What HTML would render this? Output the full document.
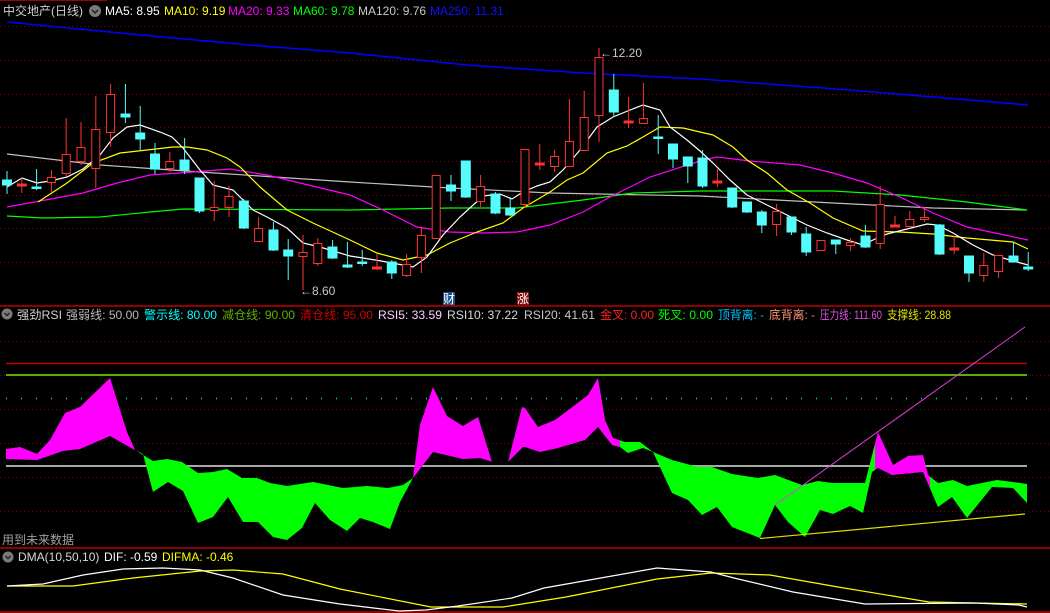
<!DOCTYPE html>
<html><head><meta charset="utf-8"><style>
html,body{margin:0;padding:0;background:#000;width:1050px;height:613px;overflow:hidden}
svg{display:block}
text{font-family:"Liberation Sans","Noto Sans CJK SC",sans-serif;font-size:12px}
</style></head><body>
<svg width="1050" height="613" viewBox="0 0 1050 613" xmlns="http://www.w3.org/2000/svg">
<rect width="1050" height="613" fill="#000"/>
<line x1="0" y1="0.5" x2="107" y2="0.5" stroke="#a00000"/>
<g stroke="#8a0000" stroke-dasharray="1,3" stroke-width="1">
<line x1="0" y1="26.5" x2="1050" y2="26.5"/><line x1="0" y1="60.5" x2="1050" y2="60.5"/>
<line x1="0" y1="94.5" x2="1050" y2="94.5"/><line x1="0" y1="127.5" x2="1050" y2="127.5"/>
<line x1="0" y1="161.5" x2="1050" y2="161.5"/><line x1="0" y1="195.5" x2="1050" y2="195.5"/>
<line x1="0" y1="228.5" x2="1050" y2="228.5"/><line x1="0" y1="262.5" x2="1050" y2="262.5"/>
<line x1="0" y1="341.5" x2="1050" y2="341.5"/><line x1="0" y1="375.5" x2="1050" y2="375.5"/>
<line x1="0" y1="409.5" x2="1050" y2="409.5"/><line x1="0" y1="443.5" x2="1050" y2="443.5"/>
<line x1="0" y1="477.5" x2="1050" y2="477.5"/><line x1="0" y1="511.5" x2="1050" y2="511.5"/>
</g>
<line x1="0" y1="306" x2="1050" y2="306" stroke="#c00000" stroke-width="1.5"/>
<line x1="0" y1="548" x2="1050" y2="548" stroke="#c00000" stroke-width="1.5"/>
<line x1="0" y1="612" x2="1050" y2="612" stroke="#c00000" stroke-width="1.5"/>

<g fill="none" stroke-width="1.2">
<polyline stroke="#0000ff" stroke-width="1.6" points="7,22 120,33 250,45 350,53 467,65 583,73 700,79 850,90 1028,105"/>
<polyline stroke="#c0c0c0" points="7,154 100,165 200,172 350,182 450,188 550,193 700,196 833,203 933,208 1027,210"/>
<polyline stroke="#00ff00" points="7,216 43,218 100,217 150,212 183,209 350,210 450,208 517,208 583,200 633,193 700,191 833,191 900,195 967,202 1027,210"/>
<polyline stroke="#ff00ff" points="7,207 40,201 83,193 117,183 150,175 193,172 230,169 267,175 300,183 350,195 383,210 417,227 450,232 483,233 517,232 550,225 583,212 610,197 650,177 700,161 717,157 750,161 800,165 833,173 867,183 900,197 933,213 967,227 1028,240"/>
<polyline stroke="#ffff00" points="38,202 67,183 93,163 120,153 147,150 173,147 187,147 207,150 227,158 240,167 260,187 287,210 313,223 350,240 377,253 403,260 427,255 450,243 477,232 503,223 523,208 550,192 567,180 583,173 607,153 627,146 643,137 660,127 683,128 700,132 713,135 733,147 747,160 767,173 787,190 810,203 833,218 863,231 900,232 933,234 967,238 1013,242 1028,249"/>
<polyline stroke="#ffffff" points="7,187 22,178 37,183 50,181 67,177 83,169 100,155 113,138 127,127 140,125 160,132 172,137 183,148 200,170 213,185 233,190 253,210 267,217 287,228 303,243 320,247 350,256 363,258 387,262 413,267 427,257 443,235 460,217 483,196 500,194 512,199 523,192 537,186 550,182 563,170 580,150 597,127 613,117 630,110 643,105 660,110 670,127 687,140 700,151 713,163 730,180 747,195 767,205 787,215 807,225 827,233 847,240 863,245 873,240 887,234 907,229 927,224 937,225 953,233 973,245 993,255 1013,261 1028,265"/>
</g>

<g stroke-width="1">
<g stroke="#54fcfc" fill="#54fcfc">
<line x1="7" y1="171" x2="7" y2="194"/><rect x="2.5" y="180" width="9" height="5"/>
<line x1="36.6" y1="169" x2="36.6" y2="190"/><rect x="32" y="187" width="9" height="1.5"/>
<line x1="125.4" y1="84" x2="125.4" y2="123"/><rect x="121" y="114" width="9" height="3"/>
<line x1="140.2" y1="106" x2="140.2" y2="151"/><rect x="135.7" y="133" width="9" height="6"/>
<line x1="155" y1="143" x2="155" y2="174"/><rect x="150.5" y="154" width="9" height="15"/>
<line x1="184.6" y1="138" x2="184.6" y2="174"/><rect x="180" y="160" width="9" height="10"/>
<line x1="199.4" y1="178" x2="199.4" y2="213"/><rect x="195" y="178" width="9" height="33"/>
<line x1="243.8" y1="199" x2="243.8" y2="229"/><rect x="239.3" y="201" width="9" height="27"/>
<line x1="273.4" y1="222" x2="273.4" y2="251"/><rect x="269" y="230" width="9" height="20"/>
<line x1="288.2" y1="239" x2="288.2" y2="280"/><rect x="283.7" y="250" width="9" height="6"/>
<line x1="332.6" y1="240" x2="332.6" y2="259"/><rect x="328" y="247" width="9" height="11"/>
<line x1="347.4" y1="242" x2="347.4" y2="268"/><rect x="343" y="265" width="9" height="2"/>
<line x1="362.2" y1="250" x2="362.2" y2="266"/><rect x="357.7" y="262" width="9" height="1.5"/>
<line x1="391.8" y1="260" x2="391.8" y2="279"/><rect x="387.3" y="262" width="9" height="11"/>
<line x1="451" y1="175" x2="451" y2="201"/><rect x="446.5" y="185" width="9" height="6"/>
<line x1="465.8" y1="161" x2="465.8" y2="198"/><rect x="461.3" y="161" width="9" height="36"/>
<line x1="495.4" y1="192" x2="495.4" y2="214"/><rect x="491" y="194" width="9" height="19"/>
<line x1="510.2" y1="197" x2="510.2" y2="216"/><rect x="505.7" y="208" width="9" height="7"/>
<line x1="613.8" y1="74" x2="613.8" y2="117"/><rect x="609.3" y="90" width="9" height="22"/>
<line x1="658.2" y1="115" x2="658.2" y2="154"/><rect x="653.7" y="137" width="9" height="1.5"/>
<line x1="673" y1="144" x2="673" y2="168"/><rect x="668.5" y="144" width="9" height="15"/>
<line x1="687.8" y1="157" x2="687.8" y2="183"/><rect x="683.3" y="157" width="9" height="9"/>
<line x1="702.6" y1="150" x2="702.6" y2="188"/><rect x="698" y="158" width="9" height="28"/>
<line x1="732.2" y1="188" x2="732.2" y2="208"/><rect x="727.7" y="188" width="9" height="19"/>
<line x1="747" y1="202" x2="747" y2="213"/><rect x="742.5" y="202" width="9" height="10"/>
<line x1="761.8" y1="210" x2="761.8" y2="233"/><rect x="757.3" y="212" width="9" height="13"/>
<line x1="791.4" y1="217" x2="791.4" y2="235"/><rect x="787" y="217" width="9" height="15"/>
<line x1="806.2" y1="227" x2="806.2" y2="256"/><rect x="801.7" y="234" width="9" height="18"/>
<line x1="835.8" y1="240" x2="835.8" y2="254"/><rect x="831.3" y="240" width="9" height="4"/>
<line x1="865.4" y1="225" x2="865.4" y2="248"/><rect x="861" y="236" width="9" height="11"/>
<line x1="939.4" y1="224" x2="939.4" y2="255"/><rect x="935" y="225" width="9" height="29"/>
<line x1="969" y1="256" x2="969" y2="282"/><rect x="964.5" y="256" width="9" height="17"/>
<line x1="1013.4" y1="242" x2="1013.4" y2="262"/><rect x="1009" y="256" width="9" height="6"/>
<line x1="1028.2" y1="252" x2="1028.2" y2="271"/><rect x="1023.7" y="267" width="9" height="2"/>
</g>
<g stroke="#ff3232" fill="#000">
<line x1="21.8" y1="178" x2="21.8" y2="193"/><rect x="17.3" y="184" width="9" height="2" fill="#ff3232"/>
<line x1="51.4" y1="170" x2="51.4" y2="192"/><rect x="47.4" y="177.5" width="8" height="5"/>
<line x1="66.2" y1="118" x2="66.2" y2="176"/><rect x="62.2" y="154.5" width="8" height="19"/>
<line x1="81" y1="122" x2="81" y2="165"/><rect x="77" y="147.5" width="8" height="14"/>
<line x1="95.8" y1="96" x2="95.8" y2="188"/><rect x="91.8" y="129.5" width="8" height="39"/>
<line x1="110.6" y1="84" x2="110.6" y2="147"/><rect x="106.6" y="94.5" width="8" height="38"/>
<line x1="169.8" y1="152" x2="169.8" y2="172"/><rect x="165.8" y="161.5" width="8" height="7"/>
<line x1="214.2" y1="181" x2="214.2" y2="221"/><rect x="210.2" y="207.5" width="8" height="3"/>
<line x1="229" y1="186" x2="229" y2="217"/><rect x="225" y="196.5" width="8" height="11"/>
<line x1="258.6" y1="217" x2="258.6" y2="242"/><rect x="254.6" y="228.5" width="8" height="13"/>
<line x1="303" y1="235" x2="303" y2="290"/><rect x="299" y="252.5" width="8" height="4"/>
<line x1="317.8" y1="238" x2="317.8" y2="266"/><rect x="313.8" y="243.5" width="8" height="20"/>
<line x1="377" y1="254" x2="377" y2="270"/><rect x="372.5" y="267" width="9" height="2" fill="#ff3232"/>
<line x1="406.6" y1="254" x2="406.6" y2="277"/><rect x="402.6" y="264.5" width="8" height="11"/>
<line x1="421.4" y1="227" x2="421.4" y2="273"/><rect x="417.4" y="235.5" width="8" height="22"/>
<rect x="432.2" y="175.5" width="8" height="63"/>
<line x1="480.6" y1="175" x2="480.6" y2="207"/><rect x="476.6" y="186.5" width="8" height="15"/>
<line x1="525" y1="149" x2="525" y2="208"/><rect x="521" y="149.5" width="8" height="55"/>
<line x1="539.8" y1="144" x2="539.8" y2="170"/><rect x="535.3" y="163" width="9" height="2" fill="#ff3232"/>
<line x1="554.6" y1="150" x2="554.6" y2="172"/><rect x="550.6" y="156.5" width="8" height="10"/>
<line x1="569.4" y1="99" x2="569.4" y2="167"/><rect x="565.4" y="141.5" width="8" height="25"/>
<line x1="584.2" y1="91" x2="584.2" y2="151"/><rect x="580.2" y="117.5" width="8" height="33"/>
<line x1="599" y1="48" x2="599" y2="142"/><rect x="595" y="57.5" width="8" height="58"/>
<line x1="628.6" y1="97" x2="628.6" y2="128"/><rect x="624.1" y="121" width="9" height="2" fill="#ff3232"/>
<line x1="643.4" y1="83" x2="643.4" y2="124"/><rect x="639.4" y="118.5" width="8" height="5"/>
<line x1="717.4" y1="169" x2="717.4" y2="187"/><rect x="712.9" y="181" width="9" height="2" fill="#ff3232"/>
<line x1="776.6" y1="204" x2="776.6" y2="236"/><rect x="772.6" y="211.5" width="8" height="13"/>
<rect x="817" y="240.5" width="8" height="10"/>
<line x1="850.6" y1="238" x2="850.6" y2="251"/><rect x="846.6" y="242.5" width="8" height="3"/>
<line x1="880.2" y1="186" x2="880.2" y2="249"/><rect x="876.2" y="204.5" width="8" height="39"/>
<line x1="895" y1="216" x2="895" y2="227"/><rect x="890.5" y="225" width="9" height="2" fill="#ff3232"/>
<line x1="909.8" y1="211" x2="909.8" y2="227"/><rect x="905.8" y="219.5" width="8" height="7"/>
<line x1="924.6" y1="207" x2="924.6" y2="222"/><rect x="920.6" y="217.5" width="8" height="2"/>
<line x1="954.2" y1="236" x2="954.2" y2="254"/><rect x="949.7" y="248" width="9" height="2" fill="#ff3232"/>
<line x1="983.8" y1="253" x2="983.8" y2="282"/><rect x="979.8" y="265.5" width="8" height="10"/>
<line x1="998.6" y1="255" x2="998.6" y2="278"/><rect x="994.6" y="255.5" width="8" height="16"/>
</g>
</g>
<text x="600" y="57" fill="#c8c8c8">←12.20</text>
<text x="300" y="295" fill="#c8c8c8">←8.60</text>
<rect x="443" y="292" width="12" height="13" fill="#1c4f86"/><text x="443" y="303" fill="#fff" font-size="11">财</text>
<rect x="517" y="292" width="12" height="13" fill="#8a0c0c"/><text x="517" y="303" fill="#fff" font-size="11">涨</text>

<text x="3" y="15" fill="#d0d0d0">中交地产(日线)</text>
<circle cx="95" cy="11" r="6" fill="#7a7a7a"/><polyline points="92,10 95,13 98,10" fill="none" stroke="#222" stroke-width="1.5"/>
<text x="105" y="15" fill="#fff">MA5: 8.95</text>
<text x="164" y="15" fill="#ffff00">MA10: 9.19</text>
<text x="228" y="15" fill="#ff00ff">MA20: 9.33</text>
<text x="293" y="15" fill="#00ff00">MA60: 9.78</text>
<text x="358" y="15" fill="#c8c8c8">MA120: 9.76</text>
<text x="430" y="15" fill="#1010ff">MA250: 11.31</text>

<defs>
<clipPath id="mg"><rect x="0" y="320" width="138" height="230"/><rect x="413" y="320" width="207" height="230"/><rect x="875" y="320" width="55" height="230"/></clipPath>
<clipPath id="gr"><rect x="138" y="320" width="275" height="230"/><rect x="620" y="320" width="255" height="230"/><rect x="930" y="320" width="120" height="230"/></clipPath>
<polygon id="rp" points="6,449 20,447 37,454 50,440 65,413 80,407 110,378 127,432 135,450 153,461 167,459 182,462 198,473 213,472 227,469 242,478 257,478 270,483 287,486 313,482 343,488 367,486 388,488 403,485 413,478 420,425 433,387 447,416 463,426 478,417 492,462 508,462 522,407 525,408 538,427 555,420 575,405 588,395 598,378 605,420 613,438 625,442 640,442 653,452 672,460 698,467 712,467 732,474 758,478 775,475 802,485 818,481 832,483 865,483 878,432 893,465 908,456 923,455 928,475 938,483 953,480 967,486 997,480 1013,482 1027,484 1027,503 1013,488 992,487 967,518 952,497 938,507 923,472 892,475 878,468 872,472 863,513 850,506 833,514 820,510 805,537 788,522 775,505 760,538 732,527 717,507 702,515 688,500 672,493 653,452 643,448 628,453 620,447 612,445 598,427 585,440 558,448 540,452 525,447 523,447 508,462 493,462 480,458 463,459 433,452 413,478 400,502 390,529 373,522 360,518 347,531 330,520 315,503 302,528 287,540 273,537 258,522 243,522 228,497 213,517 198,523 183,491 168,482 153,492 143,454 133,449 110,436 80,449 63,451 37,460 6,459"/>
</defs>
<line x1="6" y1="363.5" x2="1027" y2="363.5" stroke="#c00000" stroke-width="1.5"/>
<line x1="6" y1="375" x2="1027" y2="375" stroke="#58b000" stroke-width="2"/>
<line x1="6" y1="398.5" x2="1027" y2="398.5" stroke="#00e0e0" stroke-dasharray="1,14" stroke-width="1.5"/>
<line x1="6" y1="466" x2="1027" y2="466" stroke="#a8a8a8" stroke-width="2"/>
<use href="#rp" clip-path="url(#gr)" fill="#00ff00"/>
<use href="#rp" clip-path="url(#mg)" fill="#ff00ff"/>
<line x1="775" y1="505" x2="1025" y2="327" stroke="#e040e0" stroke-width="1"/>
<line x1="760" y1="538.5" x2="1025" y2="514" stroke="#e0e000" stroke-width="1.2"/>
<text x="2" y="544" fill="#a0a0a0">用到未来数据</text>

<circle cx="7" cy="314" r="5.5" fill="#7a7a7a"/><polyline points="4.5,313 7,315.5 9.5,313" fill="none" stroke="#222" stroke-width="1.5"/>
<g lengthAdjust="spacingAndGlyphs">
<text x="17" y="319" fill="#d0d0d0" textLength="45" lengthAdjust="spacingAndGlyphs">强劲RSI</text>
<text x="66" y="319" fill="#b8b8b8" textLength="73" lengthAdjust="spacingAndGlyphs">强弱线: 50.00</text>
<text x="144" y="319" fill="#00ffff" textLength="73" lengthAdjust="spacingAndGlyphs">警示线: 80.00</text>
<text x="222" y="319" fill="#5fb000" textLength="73" lengthAdjust="spacingAndGlyphs">减仓线: 90.00</text>
<text x="300" y="319" fill="#d00000" textLength="73" lengthAdjust="spacingAndGlyphs">清仓线: 95.00</text>
<text x="378" y="319" fill="#ffd0ff" textLength="64" lengthAdjust="spacingAndGlyphs">RSI5: 33.59</text>
<text x="447" y="319" fill="#d8d8d8" textLength="71" lengthAdjust="spacingAndGlyphs">RSI10: 37.22</text>
<text x="524" y="319" fill="#c8c8c8" textLength="71" lengthAdjust="spacingAndGlyphs">RSI20: 41.61</text>
<text x="600" y="319" fill="#ff2020" textLength="54" lengthAdjust="spacingAndGlyphs">金叉: 0.00</text>
<text x="658" y="319" fill="#00ff00" textLength="55" lengthAdjust="spacingAndGlyphs">死叉: 0.00</text>
<text x="718" y="319" fill="#00c0ff" textLength="46" lengthAdjust="spacingAndGlyphs">顶背离: -</text>
<text x="769" y="319" fill="#ff9070" textLength="46" lengthAdjust="spacingAndGlyphs">底背离: -</text>
<text x="820" y="319" fill="#e050e0" textLength="62" lengthAdjust="spacingAndGlyphs">压力线: 111.60</text>
<text x="887" y="319" fill="#e0e000" textLength="64" lengthAdjust="spacingAndGlyphs">支撑线: 28.88</text>
</g>

<circle cx="8" cy="557" r="5.5" fill="#7a7a7a"/><polyline points="5.5,556 8,558.5 10.5,556" fill="none" stroke="#222" stroke-width="1.5"/>
<text x="18" y="561" fill="#d8d8d8">DMA(10,50,10)</text>
<text x="104" y="561" fill="#fff">DIF: -0.59</text>
<text x="162" y="561" fill="#ffff00">DIFMA: -0.46</text>
<g fill="none" stroke-width="1.2">
<polyline stroke="#ffff00" points="7,586 73,586 133,578 200,571 233,570 283,574 340,589 431,607 503,607 566,597 657,579 711,573 770,575 838,587 929,602 1027,604"/>
<polyline stroke="#ffffff" points="7,586 43,584 83,575 123,569 163,568 200,570 233,578 283,595 340,604 399,611 426,610 458,606 512,598 544,588 612,576 657,568 711,572 734,578 793,592 865,604 974,603 1019,605 1027,607"/>
</g>
</svg>
</body></html>
